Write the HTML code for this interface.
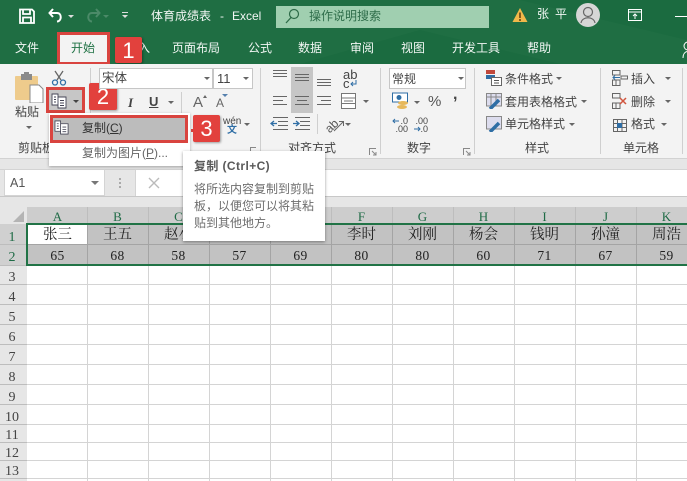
<!DOCTYPE html>
<html><head><meta charset="utf-8">
<style>
html,body{margin:0;padding:0}
#p{position:relative;width:687px;height:481px;overflow:hidden;background:#fff;font-family:"Liberation Sans","Noto Sans CJK SC",sans-serif;color:#444}
#p div,#p span.a,#p svg{position:absolute}
.t{white-space:nowrap;line-height:1}
.w{color:#fff}
.tb{font-size:12px;color:#f2f7f4}
.rb{font-size:12px;color:#444}
.ch{font-family:"Liberation Serif","Noto Serif CJK SC",serif;font-size:13px;color:#1f6b46;width:61px;text-align:center;top:210px;line-height:14px}
.rh{font-family:"Liberation Serif",serif;font-size:14px;color:#444;width:24px;text-align:center;line-height:16px;left:0}
.c{font-family:"Liberation Serif","Noto Serif CJK SC",serif;font-size:14.5px;color:#222;width:61px;text-align:center;top:226px;line-height:18px}
.n{font-family:"Liberation Serif",serif;font-size:13.5px;color:#222;width:61px;text-align:center;top:248px;line-height:15px;letter-spacing:.4px}
.red{background:#e2413d;color:#fff;font-size:22px;text-align:center;border-radius:2px;box-shadow:1px 1px 2px rgba(0,0,0,.35)}
.box{border:3px solid #d9443f;box-sizing:border-box}
.dd{width:0;height:0;border-left:3px solid transparent;border-right:3px solid transparent;border-top:3px solid #666}
</style></head><body>
<div id="p">
<!-- title -->
<div style="left:0;top:0;width:687px;height:64px;background:#1f6e43"></div>
<svg style="left:0;top:0" width="687" height="64"><path d="M300 64 L420 30 L560 64Z M520 0 L687 40 L687 0Z" fill="#1a6a3e" opacity=".7"/></svg>
<svg style="left:18px;top:7px" width="18" height="18" viewBox="0 0 18 18"><path d="M2 2.500H14L16 4.500V16H2Z M5 3V7H12V3 M5 16V10.500H13V16" fill="none" stroke="#fff" stroke-width="1.800"/></svg>
<svg style="left:47px;top:7px" width="18" height="18" viewBox="0 0 18 18"><path d="M6 2 L2.500 6 L6 10 M3 6 H10 C15 6 15 14 10 14.500" fill="none" stroke="#fff" stroke-width="2"/></svg>
<div class="dd" style="left:68px;top:15px;border-top-color:#ddd"></div>
<svg style="left:84px;top:7px" width="18" height="18" viewBox="0 0 18 18"><path d="M12 2 L15.500 6 L12 10 M15 6 H8 C3 6 3 14 8 14.500" fill="none" stroke="#4b8a68" stroke-width="2"/></svg>
<div class="dd" style="left:103px;top:15px;border-top-color:#4b8a68"></div>
<div style="left:122px;top:12px;width:6px;height:1px;background:#ddd"></div>
<div class="dd" style="left:122px;top:15px;border-top-color:#ddd"></div>
<div class="t tb" style="left:151px;top:10px">体育成绩表</div>
<div class="t tb" style="left:220px;top:10px">-</div>
<div class="t tb" style="left:232px;top:10px">Excel</div>
<div style="left:276px;top:6px;width:213px;height:22px;background:#a0cfb0"></div>
<svg style="left:284px;top:8px" width="16" height="17" viewBox="0 0 16 17"><circle cx="10" cy="6" r="4.500" fill="none" stroke="#2d6b48" stroke-width="1.200"/><path d="M7 9.500L2 15" stroke="#2d6b48" stroke-width="1.300"/></svg>
<div class="t" style="left:309px;top:10px;font-size:12px;color:#2e6d4a">操作说明搜索</div>
<svg style="left:512px;top:7px" width="16" height="16" viewBox="0 0 16 16"><path d="M8 1L15.500 15H.5Z" fill="#f0b84a"/><path d="M8 5.500V11M8 12V14" stroke="#5a3a10" stroke-width="1.500"/></svg>
<div class="t" style="left:537px;top:8px;font-size:12px;color:#f2f7f4;letter-spacing:6px">张平</div>
<div style="left:576px;top:3px;width:24px;height:24px;border-radius:12px;background:#d6d6d6"></div>
<svg style="left:576px;top:3px" width="24" height="24" viewBox="0 0 24 24"><circle cx="12" cy="9" r="4.500" fill="none" stroke="#666" stroke-width="1.200"/><path d="M5 20C6 13 18 13 19 20" fill="none" stroke="#666" stroke-width="1.200"/></svg>
<svg style="left:628px;top:9px" width="14" height="12" viewBox="0 0 14 12"><path d="M.5.500H13.500V11.500H.5ZM.5 3H13.500M7 10V5M5 7L7 5L9 7" fill="none" stroke="#fff"/></svg>
<div style="left:675px;top:16px;width:12px;height:1px;background:#fff"></div>
<!-- tabs -->
<div class="t tb" style="left:15px;top:42px">文件</div>
<div style="left:60px;top:34px;width:48px;height:30px;background:#f3f3f3"></div>
<div class="box" style="left:57px;top:32px;width:53px;height:33px"></div>
<div class="t" style="left:71px;top:42px;font-size:12px;color:#217346">开始</div>
<div class="t tb" style="left:138px;top:42px">入</div>
<div class="t tb" style="left:172px;top:42px">页面布局</div>
<div class="t tb" style="left:248px;top:42px">公式</div>
<div class="t tb" style="left:298px;top:42px">数据</div>
<div class="t tb" style="left:350px;top:42px">审阅</div>
<div class="t tb" style="left:401px;top:42px">视图</div>
<div class="t tb" style="left:452px;top:42px">开发工具</div>
<div class="t tb" style="left:527px;top:42px">帮助</div>
<svg style="left:682px;top:40px" width="5" height="18"><circle cx="6" cy="6" r="4" fill="none" stroke="#fff"/><path d="M1 18C1 14 3 12 5 11.500" fill="none" stroke="#fff"/></svg>
<div class="red" style="left:115px;top:37px;width:27px;height:26px;line-height:27px">1</div>
<!-- ribbon -->
<div style="left:0;top:64px;width:687px;height:94px;background:#f3f3f3"></div>
<div style="left:0;top:158px;width:687px;height:12px;background:#e6e6e6;border-top:1px solid #d2d2d2;box-sizing:border-box;border-bottom:1px solid #d2d2d2"></div>
<!-- separators -->
<div style="left:90px;top:68px;width:1px;height:86px;background:#cfcfcf"></div>
<div style="left:260px;top:68px;width:1px;height:86px;background:#cfcfcf"></div>
<div style="left:380px;top:68px;width:1px;height:86px;background:#cfcfcf"></div>
<div style="left:474px;top:68px;width:1px;height:86px;background:#cfcfcf"></div>
<div style="left:600px;top:68px;width:1px;height:86px;background:#cfcfcf"></div>
<div style="left:682px;top:68px;width:1px;height:86px;background:#cfcfcf"></div>
<!-- paste -->
<svg style="left:14px;top:71px" width="30" height="32" viewBox="0 0 30 32"><rect x="1" y="5" width="23" height="24" rx="1" fill="#eecb8c"/><rect x="7" y="3" width="11" height="6" fill="#8a8a8a"/><rect x="10" y="1" width="5" height="4" fill="#8a8a8a"/><path d="M16 14H25L29 18V32H16Z" fill="#fff" stroke="#888"/></svg>
<div class="t rb" style="left:15px;top:106px">粘贴</div>
<div class="dd" style="left:26px;top:126px"></div>
<div class="t rb" style="left:18px;top:142px">剪贴板</div>
<svg style="left:51px;top:70px" width="16" height="16" viewBox="0 0 16 16"><path d="M4 1L10 10M12 1L6 10" stroke="#666" stroke-width="1.300"/><circle cx="4" cy="12.500" r="2.500" fill="none" stroke="#2f6ea5" stroke-width="1.300"/><circle cx="12" cy="12.500" r="2.500" fill="none" stroke="#2f6ea5" stroke-width="1.300"/></svg>
<div style="left:47px;top:88px;width:38px;height:25px;background:#c6c6c6"></div>
<div class="box" style="left:46px;top:87px;width:39px;height:26px"></div>
<svg style="left:51px;top:93px" width="17" height="16" viewBox="0 0 17 16"><path d="M1 1H7V12H1ZM7 4H15V15H7ZM3 4H5M3 6.500H5M3 9H5M9 7.500H13M9 10H13M9 12.500H13" fill="#fff" stroke="#445" stroke-width=".9"/></svg>
<div class="dd" style="left:73px;top:100px;border-top-color:#444"></div>
<div class="red" style="left:89px;top:83px;width:28px;height:27px;line-height:28px">2</div>
<!-- font -->
<div style="left:99px;top:68px;width:114px;height:21px;background:#fff;border:1px solid #c6c6c6;box-sizing:border-box"></div>
<div style="left:213px;top:68px;width:40px;height:21px;background:#fff;border:1px solid #c6c6c6;box-sizing:border-box"></div>
<div class="t" style="left:102px;top:72px;font-size:12.500px;color:#444">宋体</div>
<div class="t" style="left:217px;top:72px;font-size:13px;color:#444">11</div>
<div class="dd" style="left:204px;top:77px"></div>
<div class="dd" style="left:243px;top:77px"></div>
<div class="t" style="left:128px;top:95px;font:italic bold 13px 'Liberation Serif',serif;color:#444">I</div>
<div class="t" style="left:149px;top:95px;font-size:13px;font-weight:bold;color:#444;text-decoration:underline">U</div>
<div class="dd" style="left:168px;top:101px"></div>
<div style="left:181px;top:92px;width:1px;height:21px;background:#cfcfcf"></div>
<div class="t" style="left:193px;top:95px;font-size:15px;color:#666">A</div>
<div class="t" style="left:216px;top:97px;font-size:12px;color:#666">A</div>
<div style="left:203px;top:93px;font-size:0;width:0;height:0;border:2.500px solid transparent;border-bottom:3px solid #666"></div>
<div style="left:222px;top:94px;font-size:0;width:0;height:0;border:3px solid transparent;border-top:3px solid #5580ad"></div>
<div class="t" style="left:223px;top:117px;font-size:10px;color:#444">wén</div>
<div class="t" style="left:227px;top:126px;font-size:10px;color:#2f6ea5;font-weight:bold">文</div>
<div class="dd" style="left:244px;top:123px"></div>
<svg style="left:250px;top:147px" width="8" height="8"><path d="M.5 6V.5H6" fill="none" stroke="#888"/></svg>
<!-- align -->
<div style="left:291px;top:67px;width:22px;height:46px;background:#c6c6c6"></div>
<svg style="left:270px;top:68px" width="72" height="70" viewBox="0 0 72 70" stroke="#666" fill="none"><path d="M3 2.500H17M3 5.500H17M3 8.500H17M25 6.500H39M25 9.500H39M25 12.500H39M47 11.500H61M47 14.500H61M47 17.500H61M3 28.500H17M3 32.500H13M3 36.500H17M25 28.500H39M27 32.500H37M25 36.500H39M47 28.500H61M51 32.500H61M47 36.500H61M8 53.500H18M8 57.500H18M3 49.500H18M3 61.500H18M30 53.500H40M30 57.500H40M25 49.500H40M25 61.500H40"/><path d="M7 55.500H1M4 53L1 55.500L4 58M23 55.500H29M26 53L29 55.500L26 58" stroke="#2f6ea5" stroke-width="1.300"/></svg>
<div style="left:317px;top:114px;width:1px;height:20px;background:#cfcfcf"></div>
<div class="t" style="left:343px;top:70px;font-size:13px;line-height:9px;color:#444;width:14px">ab<br>c</div>
<svg style="left:349px;top:79px" width="8" height="8"><path d="M7 1V5H2M4 3L2 5L4 7" fill="none" stroke="#2f6ea5"/></svg>
<svg style="left:341px;top:93px" width="15" height="16"><path d="M.5.500H14.500V15.500H.5ZM.5 5H14.500M.5 10.500H14.500M3 8H12" fill="#fff" stroke="#777"/></svg>
<div class="dd" style="left:363px;top:100px"></div>
<div class="t" style="left:325px;top:120px;font-size:12px;color:#555;transform:rotate(-45deg)">ab</div>
<svg style="left:331px;top:117px" width="16" height="16"><path d="M3 14L12 5M8 4.500H12.500V9" fill="none" stroke="#666"/></svg>
<div class="dd" style="left:345px;top:123px"></div>
<div class="t rb" style="left:288px;top:142px">对齐方式</div>
<svg style="left:369px;top:148px" width="8" height="8"><path d="M.5 7V.5H7M3 3L7 7M4 7H7V4" fill="none" stroke="#888"/></svg>
<!-- number -->
<div style="left:389px;top:68px;width:77px;height:21px;background:#fff;border:1px solid #c6c6c6;box-sizing:border-box"></div>
<div class="t rb" style="left:392px;top:73px">常规</div>
<div class="dd" style="left:458px;top:77px"></div>
<svg style="left:392px;top:92px" width="18" height="18"><rect x="0.500" y="1" width="15" height="9" fill="#fff" stroke="#2f6ea5"/><circle cx="7" cy="5.500" r="2.500" fill="#2f6ea5"/><ellipse cx="11" cy="11" rx="5" ry="2" fill="#e6b85c"/><ellipse cx="10" cy="15" rx="5" ry="2" fill="#e6b85c"/></svg>
<div class="dd" style="left:414px;top:101px"></div>
<div class="t" style="left:428px;top:94px;font-size:15px;color:#555">%</div>
<div class="t" style="left:453px;top:87px;font-size:16px;font-weight:bold;color:#444">,</div>
<div class="t" style="left:388px;top:117px;font-size:9px;line-height:8px;color:#444;width:20px;text-align:right">.0<br>.00</div>
<div class="t" style="left:408px;top:117px;font-size:9px;line-height:8px;color:#444;width:20px;text-align:right">.00<br>.0</div>
<svg style="left:392px;top:116px" width="42" height="16" fill="none" stroke="#2f6ea5"><path d="M7 5H1M3 3L1 5L3 7M28 13H22M26 11L28 13L26 15"/></svg>
<div class="t rb" style="left:407px;top:142px">数字</div>
<svg style="left:463px;top:148px" width="8" height="8"><path d="M.5 7V.5H7M3 3L7 7M4 7H7V4" fill="none" stroke="#888"/></svg>
<!-- styles -->
<svg style="left:486px;top:70px" width="16" height="16"><rect x="0" y="0" width="9" height="4" fill="#c0483c"/><rect x="0" y="5" width="9" height="4" fill="#2f6ea5"/><rect x="5.500" y="7.500" width="10" height="8" fill="#fff" stroke="#666"/><path d="M8 10.500H13M8 13H13" stroke="#555"/></svg>
<div class="t rb" style="left:505px;top:73px">条件格式</div>
<div class="dd" style="left:556px;top:77px"></div>
<svg style="left:486px;top:93px" width="16" height="16"><path d="M.5.500H15.500V13H.5ZM.5 4H15.500M5 .5V13M10 .5V13" fill="#dde" stroke="#888"/><path d="M4 16L13 7" stroke="#2f6ea5" stroke-width="3.500"/></svg>
<div class="t rb" style="left:505px;top:96px">套用表格格式</div>
<div class="dd" style="left:581px;top:100px"></div>
<svg style="left:486px;top:116px" width="16" height="16"><path d="M.5.500H15.500V13H.5Z" fill="#dde" stroke="#888"/><path d="M4 16L13 7" stroke="#2f6ea5" stroke-width="3.500"/></svg>
<div class="t rb" style="left:505px;top:118px">单元格样式</div>
<div class="dd" style="left:569px;top:123px"></div>
<div class="t rb" style="left:525px;top:142px">样式</div>
<!-- cells -->
<svg style="left:612px;top:70px" width="16" height="16" fill="none" stroke="#666"><path d="M.5.500H8V5H.5ZM.5 10H8V15.500H.5ZM4 10V15.500M9 6H15.500V9H9Z"/><path d="M8 7.500H1M3 5.500L1 7.500L3 9.500" stroke="#2f6ea5"/></svg>
<div class="t rb" style="left:631px;top:73px">插入</div>
<div class="dd" style="left:665px;top:77px"></div>
<svg style="left:612px;top:93px" width="16" height="16" fill="none" stroke="#666"><path d="M.5.500H8V5H.5ZM.5 10H8V15.500H.5ZM4 10V15.500"/><path d="M8 5L14 11M14 5L8 11" stroke="#d0553e" stroke-width="1.500"/></svg>
<div class="t rb" style="left:631px;top:96px">删除</div>
<div class="dd" style="left:665px;top:100px"></div>
<svg style="left:612px;top:116px" width="16" height="16" fill="none" stroke="#666"><path d="M1.500 3.500H14.500V15.500H1.500ZM1.500 7.500H14.500M1.500 11.500H14.500M5.500 3.500V15.500M10 3.500V15.500"/><rect x="5" y="7" width="5" height="5" fill="#2f6ea5" stroke="none"/></svg>
<div class="t rb" style="left:631px;top:118px">格式</div>
<div class="dd" style="left:661px;top:123px"></div>
<div class="t rb" style="left:623px;top:142px">单元格</div>
<!-- formula bar -->
<div style="left:0;top:170px;width:687px;height:27px;background:#e6e6e6"></div>
<div style="left:4px;top:169px;width:101px;height:27px;background:#fff;border:1px solid #d4d4d4;box-sizing:border-box"></div>
<div class="t" style="left:10px;top:177px;font-size:12.500px;color:#555">A1</div>
<div class="dd" style="left:91px;top:181px;border-width:4px 4px 0;border-top-color:#777"></div>
<div style="left:119px;top:178px;width:2px;height:2px;background:#aaa;box-shadow:0 4px 0 #aaa,0 8px 0 #aaa"></div>
<div style="left:135px;top:169px;width:552px;height:27px;background:#fff;border-top:1px solid #d4d4d4;border-left:1px solid #d4d4d4;box-sizing:border-box"></div>
<svg style="left:147px;top:176px" width="14" height="14"><path d="M2 2L12 12M12 2L2 12" stroke="#bbb" stroke-width="1.400"/></svg>
<div style="left:0;top:196px;width:687px;height:1px;background:#c8c8c8"></div>
<div style="left:0;top:197px;width:687px;height:10px;background:#e6e6e6"></div>
<!-- headers -->
<div style="left:0;top:207px;width:27px;height:274px;background:#e6e6e6"></div>
<div style="left:0;top:224px;width:27px;height:41px;background:#d0d0d0"></div>
<div style="left:27px;top:207px;width:660px;height:17px;background:#cdcdcd"></div>
<svg style="left:12px;top:210px" width="14" height="14"><path d="M12 1V12H1Z" fill="#b4b4b4"/></svg>
<!-- grid -->
<svg style="left:0;top:207px" width="687" height="274"><g stroke="#d4d4d4"><path d="M27 77.500H687M27 97.500H687M27 117.500H687M27 137.500H687M27 157.500H687M27 177.500H687M27 197.500H687M27 217.500H687M27 235.500H687M27 253.500H687M27 271.500H687"/><path d="M87.500 58V274M148.500 58V274M209.500 58V274M270.500 58V274M331.500 58V274M392.500 58V274M453.500 58V274M514.500 58V274M575.500 58V274M636.500 58V274"/></g><g stroke="#bdbdbd"><path d="M0 37.500H27M0 58.500H27M0 77.500H27M0 97.500H27M0 117.500H27M0 137.500H27M0 157.500H27M0 177.500H27M0 197.500H27M0 217.500H27M0 235.500H27M0 253.500H27M0 271.500H27M87.500 0V17M148.500 0V17M209.500 0V17M270.500 0V17M331.500 0V17M392.500 0V17M453.500 0V17M514.500 0V17M575.500 0V17M636.500 0V17"/></g></svg>
<!-- selection -->
<div style="left:27px;top:224px;width:660px;height:41px;background:#c2c2c2"></div>
<div style="left:27px;top:225px;width:61px;height:19px;background:#fff"></div>
<svg style="left:0;top:224px" width="687" height="41"><path d="M27 20.500H687M87.500 0V41M148.500 0V41M209.500 0V41M270.500 0V41M331.500 0V41M392.500 0V41M453.500 0V41M514.500 0V41M575.500 0V41M636.500 0V41" stroke="#a4a4a4" fill="none"/></svg>
<div style="left:26px;top:223px;width:661px;height:2px;background:#217346"></div>
<div style="left:26px;top:264px;width:661px;height:2px;background:#217346"></div>
<div style="left:26px;top:223px;width:2px;height:43px;background:#217346"></div>
<!-- col headers -->
<div class="ch" style="left:27px">A</div><div class="ch" style="left:87px">B</div><div class="ch" style="left:148px">C</div><div class="ch" style="left:331px">F</div><div class="ch" style="left:392px">G</div><div class="ch" style="left:453px">H</div><div class="ch" style="left:514px">I</div><div class="ch" style="left:575px">J</div><div class="ch" style="left:636px">K</div>
<!-- rows -->
<div class="rh" style="top:230px;color:#1f6b46">1</div><div class="rh" style="top:250px;color:#1f6b46">2</div><div class="rh" style="top:270px">3</div><div class="rh" style="top:290px">4</div><div class="rh" style="top:310px">5</div><div class="rh" style="top:330px">6</div><div class="rh" style="top:350px">7</div><div class="rh" style="top:370px">8</div><div class="rh" style="top:390px">9</div><div class="rh" style="top:410px">10</div><div class="rh" style="top:428px">11</div><div class="rh" style="top:446px">12</div><div class="rh" style="top:464px">13</div>
<div class="c" style="left:27px">张三</div><div class="c" style="left:87px">王五</div><div class="c" style="left:148px">赵小</div><div class="c" style="left:331px">李时</div><div class="c" style="left:392px">刘刚</div><div class="c" style="left:453px">杨会</div><div class="c" style="left:514px">钱明</div><div class="c" style="left:575px">孙潼</div><div class="c" style="left:636px">周浩</div>
<div class="n" style="left:27px">65</div><div class="n" style="left:87px">68</div><div class="n" style="left:148px">58</div><div class="n" style="left:209px">57</div><div class="n" style="left:270px">69</div><div class="n" style="left:331px">80</div><div class="n" style="left:392px">80</div><div class="n" style="left:453px">60</div><div class="n" style="left:514px">71</div><div class="n" style="left:575px">67</div><div class="n" style="left:636px">59</div>
<!-- menu -->
<div style="left:49px;top:113px;width:141px;height:53px;background:#fff;box-shadow:0 1px 3px rgba(0,0,0,.3)"></div>
<div style="left:50px;top:115px;width:138px;height:28px;background:#bcbcbc"></div>
<div class="box" style="left:50px;top:115px;width:138px;height:28px"></div>
<svg style="left:54px;top:120px" width="16" height="15" viewBox="0 0 17 16"><path d="M1 1H7V12H1ZM7 4H15V15H7ZM3 4H5M3 6.500H5M3 9H5M9 7.500H13M9 10H13M9 12.500H13" fill="#fff" stroke="#445" stroke-width=".9"/></svg>
<div class="t" style="left:82px;top:122px;font-size:12px;color:#333">复制(<u>C</u>)</div>
<div class="t" style="left:82px;top:147px;font-size:12px;color:#666">复制为图片(<u>P</u>)...</div>
<div style="left:191px;top:129px;width:3px;height:3px;background:#d9443f"></div>
<div class="red" style="left:193px;top:115px;width:27px;height:27px;line-height:28px">3</div>
<!-- tooltip -->
<div style="left:183px;top:151px;width:142px;height:90px;background:#fff;box-shadow:0 1px 3px rgba(0,0,0,.4)"></div>
<div class="t" style="left:194px;top:160px;font-size:12px;font-weight:bold;color:#5a5a5a;letter-spacing:.4px">复制 (Ctrl+C)</div>
<div class="t" style="left:194px;top:183px;font-size:12px;color:#6e6e6e">将所选内容复制到剪贴</div>
<div class="t" style="left:194px;top:200px;font-size:12px;color:#6e6e6e">板，以便您可以将其粘</div>
<div class="t" style="left:194px;top:217px;font-size:12px;color:#6e6e6e">贴到其他地方。</div>
</div>
</body></html>
